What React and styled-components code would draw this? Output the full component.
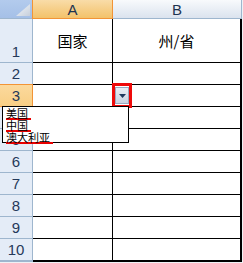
import React from 'react';
import styled, { createGlobalStyle } from 'styled-components';

const GlobalStyle = createGlobalStyle`
   html, body {
      margin: 0;
      padding: 0;
      background: #ffffff;
   }
   body {
      font-family: 'Liberation Sans', Arial, sans-serif;
   }
`;

const rows = [
   { label: '1', a: '国家', b: '州/省' },
   { label: '2' },
   { label: '3', selected: true },
   { label: '4' },
   { label: '5' },
   { label: '6' },
   { label: '7' },
   { label: '8' },
   { label: '9' },
   { label: '10', last: true },
];

const options = ['美国', '中国', '澳大利亚'];

const App = () => {
   return (
      <>
         <GlobalStyle />
         <Page>
            <Sheet>
               <Corner>
                  <svg width="14" height="12" viewBox="0 0 14 12">
                     <defs>
                        <linearGradient id="tri" x1="0" y1="0" x2="1" y2="1">
                           <stop offset="0" stopColor="#f4f7fb" />
                           <stop offset="1" stopColor="#c6cfdb" />
                        </linearGradient>
                     </defs>
                     <polygon points="14,0 14,12 0,12" fill="url(#tri)" />
                  </svg>
               </Corner>
               <ColHeader active>A</ColHeader>
               <ColHeader>B</ColHeader>

               {rows.map((row) => (
                  <React.Fragment key={row.label}>
                     <RowHeader selected={row.selected} last={row.last}>
                        {row.label}
                     </RowHeader>
                     <Cell last={row.last}>{row.a}</Cell>
                     <Cell edge last={row.last}>
                        {row.b}
                     </Cell>
                  </React.Fragment>
               ))}
            </Sheet>

            {/* кнопка выпадающего списка с красной рамкой */}
            <Highlight>
               <DropButton>
                  <svg width="7" height="4" viewBox="0 0 7 4">
                     <polygon points="0,0 7,0 3.5,4" fill="#1f3a5f" />
                  </svg>
               </DropButton>
            </Highlight>

            <List>
               {options.map((opt) => (
                  <Item key={opt}>
                     <Marked>{opt}</Marked>
                  </Item>
               ))}
            </List>
         </Page>
      </>
   );
};

const Page = styled.div`
   position: relative;
   width: 243px;
   height: 263px;
   background: #eef1f5;
   overflow: hidden;
`;

const Sheet = styled.div`
   display: grid;
   grid-template-columns: 33px 80px 129px;
   grid-template-rows: 19px 44px repeat(8, 22px) 23px;
   background: #ffffff;
   width: 242px;
`;

const Corner = styled.div`
   background: linear-gradient(#b3cbed, #a5c0e7);
   border-right: 1px solid #9eb6ce;
   border-bottom: 1px solid #9eb6ce;
   display: flex;
   align-items: flex-end;
   justify-content: flex-end;
   padding: 0 2px 2px 0;
`;

const ColHeader = styled.div`
   display: flex;
   align-items: center;
   justify-content: center;
   font-family: 'Liberation Sans', Arial, sans-serif;
   font-size: 15px;
   color: #1d3350;
   background: ${(props) =>
      props.active
         ? 'linear-gradient(#f9dca8, #f3c26a)'
         : 'linear-gradient(#f8fafc, #dbe3ee)'};
   border-bottom: 1px solid
      ${(props) => (props.active ? '#f29436' : '#9eb6ce')};
   border-right: 1px solid
      ${(props) => (props.active ? '#f29436' : '#9eb6ce')};
   ${(props) => props.active && 'margin-left: -1px; border-left: 1px solid #f29436;'}
`;

const RowHeader = styled.div`
   display: flex;
   align-items: flex-end;
   justify-content: center;
   padding-bottom: 2px;
   font-family: 'Liberation Sans', Arial, sans-serif;
   font-size: 15px;
   color: #24395a;
   background: ${(props) =>
      props.selected ? 'linear-gradient(#fbd99d, #f8cf85)' : '#e4ecf7'};
   border-right: 1px solid
      ${(props) => (props.selected ? '#f29436' : '#9eb6ce')};
   border-bottom: ${(props) => (props.last ? 2 : 1)}px solid
      ${(props) => (props.selected ? '#f29436' : '#9eb6ce')};
   ${(props) => props.selected && 'margin-top: -1px; border-top: 1px solid #f29436;'}
`;

const Cell = styled.div`
   display: flex;
   align-items: center;
   justify-content: center;
   font-family: 'Noto Sans CJK SC', 'Liberation Sans', sans-serif;
   font-size: 15px;
   color: #000000;
   border-right: ${(props) => (props.edge ? 2 : 1)}px solid #000000;
   border-bottom: ${(props) => (props.last ? 2 : 1)}px solid #000000;
`;

const Highlight = styled.div`
   position: absolute;
   left: 112px;
   top: 83px;
   width: 14px;
   height: 19px;
   border: 3px solid #ee0a0a;
   display: flex;
   align-items: center;
   justify-content: center;
`;

const DropButton = styled.div`
   width: 13px;
   height: 15px;
   border: 1px solid #98a9c2;
   background: linear-gradient(#e9eef5, #c9d3e2);
   display: flex;
   align-items: center;
   justify-content: center;
`;

const List = styled.div`
   position: absolute;
   left: 2px;
   top: 106px;
   width: 127px;
   height: 37px;
   border: 1px solid #000000;
   background: #ffffff;
   display: flex;
   flex-direction: column;
   padding: 1px 0 0 3px;
   box-sizing: border-box;
`;

const Item = styled.div`
   height: 12px;
   display: flex;
   align-items: flex-end;
`;

const Marked = styled.span`
   display: block;
   font-family: 'Noto Sans CJK SC', sans-serif;
   font-size: 11px;
   line-height: 10px;
   height: 10px;
   color: #000000;
   padding-right: 3px;
   border-bottom: 2px solid #e80000;
`;

export default App;
